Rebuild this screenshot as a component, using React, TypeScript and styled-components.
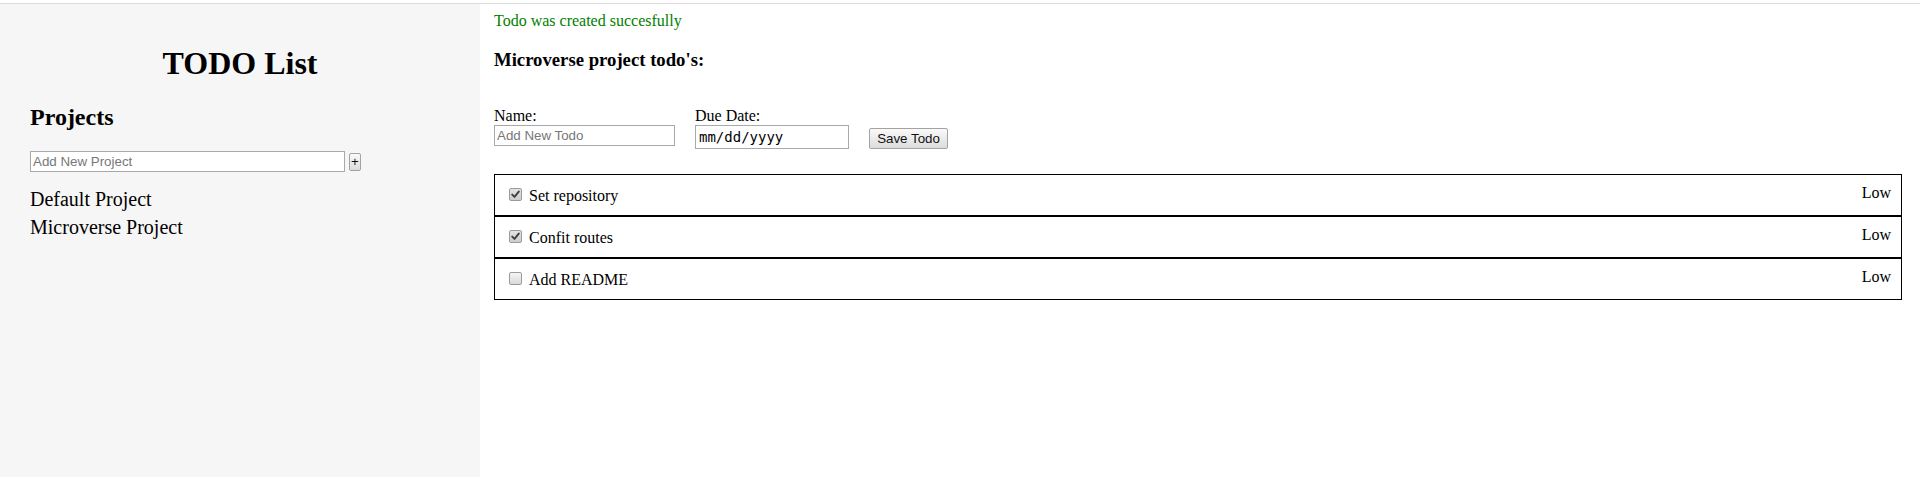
import React from "react";
import styled, { createGlobalStyle } from "styled-components";

const GlobalStyle = createGlobalStyle`
  html, body {
    margin: 0;
    padding: 0;
    background: #ffffff;
  }
  body {
    font-family: "Liberation Serif", "Times New Roman", serif;
    color: #000;
  }
  #root {
    min-height: 100vh;
    display: flex;
    flex-direction: column;
  }
`;

const TopRule = styled.div`
  margin-top: 3px;
  border-top: 1px solid #dcdcdc;
`;

const Layout = styled.div`
  flex: 1;
  display: flex;
  align-items: stretch;
`;

const Sidebar = styled.aside`
  width: 480px;
  flex-shrink: 0;
  box-sizing: border-box;
  background: #f6f6f6;
  padding: 41px 30px 0 30px;
`;

const Title = styled.h1`
  margin: 0;
  font-size: 32px;
  line-height: 36px;
  font-weight: bold;
  text-align: center;
`;

const SectionHeading = styled.h2`
  margin: 22px 0 0 0;
  font-size: 24px;
  line-height: 28px;
  font-weight: bold;
`;

const AddRow = styled.div`
  margin-top: 20px;
  display: flex;
  align-items: center;
  gap: 4px;
`;

const TextInput = styled.input<{ $w: number; $h: number }>`
  box-sizing: border-box;
  width: ${(p) => p.$w}px;
  height: ${(p) => p.$h}px;
  margin: 0;
  padding: 0 2px;
  border: 1px solid #a9a9a9;
  background: #fff;
  font-family: "Liberation Sans", Arial, sans-serif;
  font-size: 13.33px;
  color: #000;
  outline: none;
  &::placeholder {
    color: #777777;
  }
`;

const DateInput = styled.input`
  box-sizing: border-box;
  width: 154px;
  height: 24px;
  margin: 0;
  padding: 0 3px;
  border: 1px solid #a9a9a9;
  background: #fff;
  font-family: "DejaVu Sans Mono", "Liberation Mono", monospace;
  font-size: 14px;
  color: #000;
  outline: none;
`;

const GrayButton = styled.button<{ $w: number; $h: number }>`
  box-sizing: border-box;
  width: ${(p) => p.$w}px;
  height: ${(p) => p.$h}px;
  margin: 0;
  padding: 0;
  border: 1px solid #a3a3a3;
  border-radius: 2px;
  background: linear-gradient(#fafafa, #dcdcdc);
  font-family: "Liberation Sans", Arial, sans-serif;
  font-size: 13.33px;
  line-height: 1;
  color: #111;
  display: flex;
  align-items: center;
  justify-content: center;
`;

const ProjectList = styled.ul`
  list-style: none;
  margin: 13px 0 0 0;
  padding: 0;
`;

const ProjectItem = styled.li`
  font-size: 20px;
  line-height: 28px;
`;

const Main = styled.main`
  flex: 1;
  box-sizing: border-box;
  padding: 8px 18px 0 14px;
`;

const Message = styled.p`
  margin: 0;
  color: #008000;
  font-size: 16px;
  line-height: 18px;
`;

const ListHeading = styled.h3`
  margin: 19px 0 0 0;
  font-size: 18.72px;
  line-height: 22px;
  font-weight: bold;
`;

const TodoForm = styled.form`
  margin-top: 36px;
  display: flex;
  align-items: flex-end;
  gap: 20px;
`;

const Field = styled.label<{ $gapBelow?: number }>`
  display: flex;
  flex-direction: column;
  font-size: 16px;
  line-height: 18px;
  padding-bottom: ${(p) => p.$gapBelow ?? 0}px;
`;

const TodoList = styled.div`
  margin-top: 25px;
  display: flex;
  flex-direction: column;
`;

const TodoRow = styled.div`
  box-sizing: border-box;
  height: 42px;
  border: 1px solid #000;
  display: flex;
  align-items: flex-start;
  padding: 0 10px 0 14px;
`;

const CheckBox = styled.span<{ $checked: boolean }>`
  box-sizing: border-box;
  width: 13px;
  height: 13px;
  margin-top: 13px;
  border: 1px solid #9b9b9b;
  border-radius: 2px;
  background: ${(p) =>
    p.$checked
      ? "linear-gradient(#e4e4e4, #cdcdcd)"
      : "linear-gradient(#f4f4f4, #dadada)"};
  display: flex;
  align-items: center;
  justify-content: center;
  flex-shrink: 0;
`;

const TodoName = styled.span`
  margin: 12px 0 0 7px;
  font-size: 16px;
  line-height: 18px;
`;

const Priority = styled.span`
  margin: 9px 0 0 auto;
  font-size: 16px;
  line-height: 18px;
`;

type Todo = { name: string; done: boolean; priority: string };

const todos: Todo[] = [
  { name: "Set repository", done: true, priority: "Low" },
  { name: "Confit routes", done: true, priority: "Low" },
  { name: "Add README", done: false, priority: "Low" },
];

const Check = ({ checked }: { checked: boolean }) => (
  <CheckBox $checked={checked} role="checkbox" aria-checked={checked}>
    {checked && (
      <svg width="9" height="9" viewBox="0 0 9 9">
        <path
          d="M1.2 4.6 L3.5 6.9 L7.8 1.6"
          fill="none"
          stroke="#3f3f3f"
          strokeWidth="1.9"
          strokeLinecap="round"
          strokeLinejoin="round"
        />
      </svg>
    )}
  </CheckBox>
);

export default function App() {
  return (
    <>
      <GlobalStyle />
      <TopRule />
      <Layout>
        <Sidebar>
          <Title>TODO List</Title>
          <SectionHeading>Projects</SectionHeading>
          <AddRow>
            <TextInput $w={315} $h={21} placeholder="Add New Project" />
            <GrayButton $w={12} $h={18} type="button">
              +
            </GrayButton>
          </AddRow>
          <ProjectList>
            <ProjectItem>Default Project</ProjectItem>
            <ProjectItem>Microverse Project</ProjectItem>
          </ProjectList>
        </Sidebar>
        <Main>
          <Message>Todo was created succesfully</Message>
          <ListHeading>Microverse project todo's:</ListHeading>
          <TodoForm onSubmit={(e) => e.preventDefault()}>
            <Field $gapBelow={3}>
              Name:
              <TextInput $w={181} $h={21} placeholder="Add New Todo" />
            </Field>
            <Field>
              Due Date:
              <DateInput readOnly value="mm/dd/yyyy" />
            </Field>
            <GrayButton $w={79} $h={21} type="submit">
              Save Todo
            </GrayButton>
          </TodoForm>
          <TodoList>
            {todos.map((t) => (
              <TodoRow key={t.name}>
                <Check checked={t.done} />
                <TodoName>{t.name}</TodoName>
                <Priority>{t.priority}</Priority>
              </TodoRow>
            ))}
          </TodoList>
        </Main>
      </Layout>
    </>
  );
}
